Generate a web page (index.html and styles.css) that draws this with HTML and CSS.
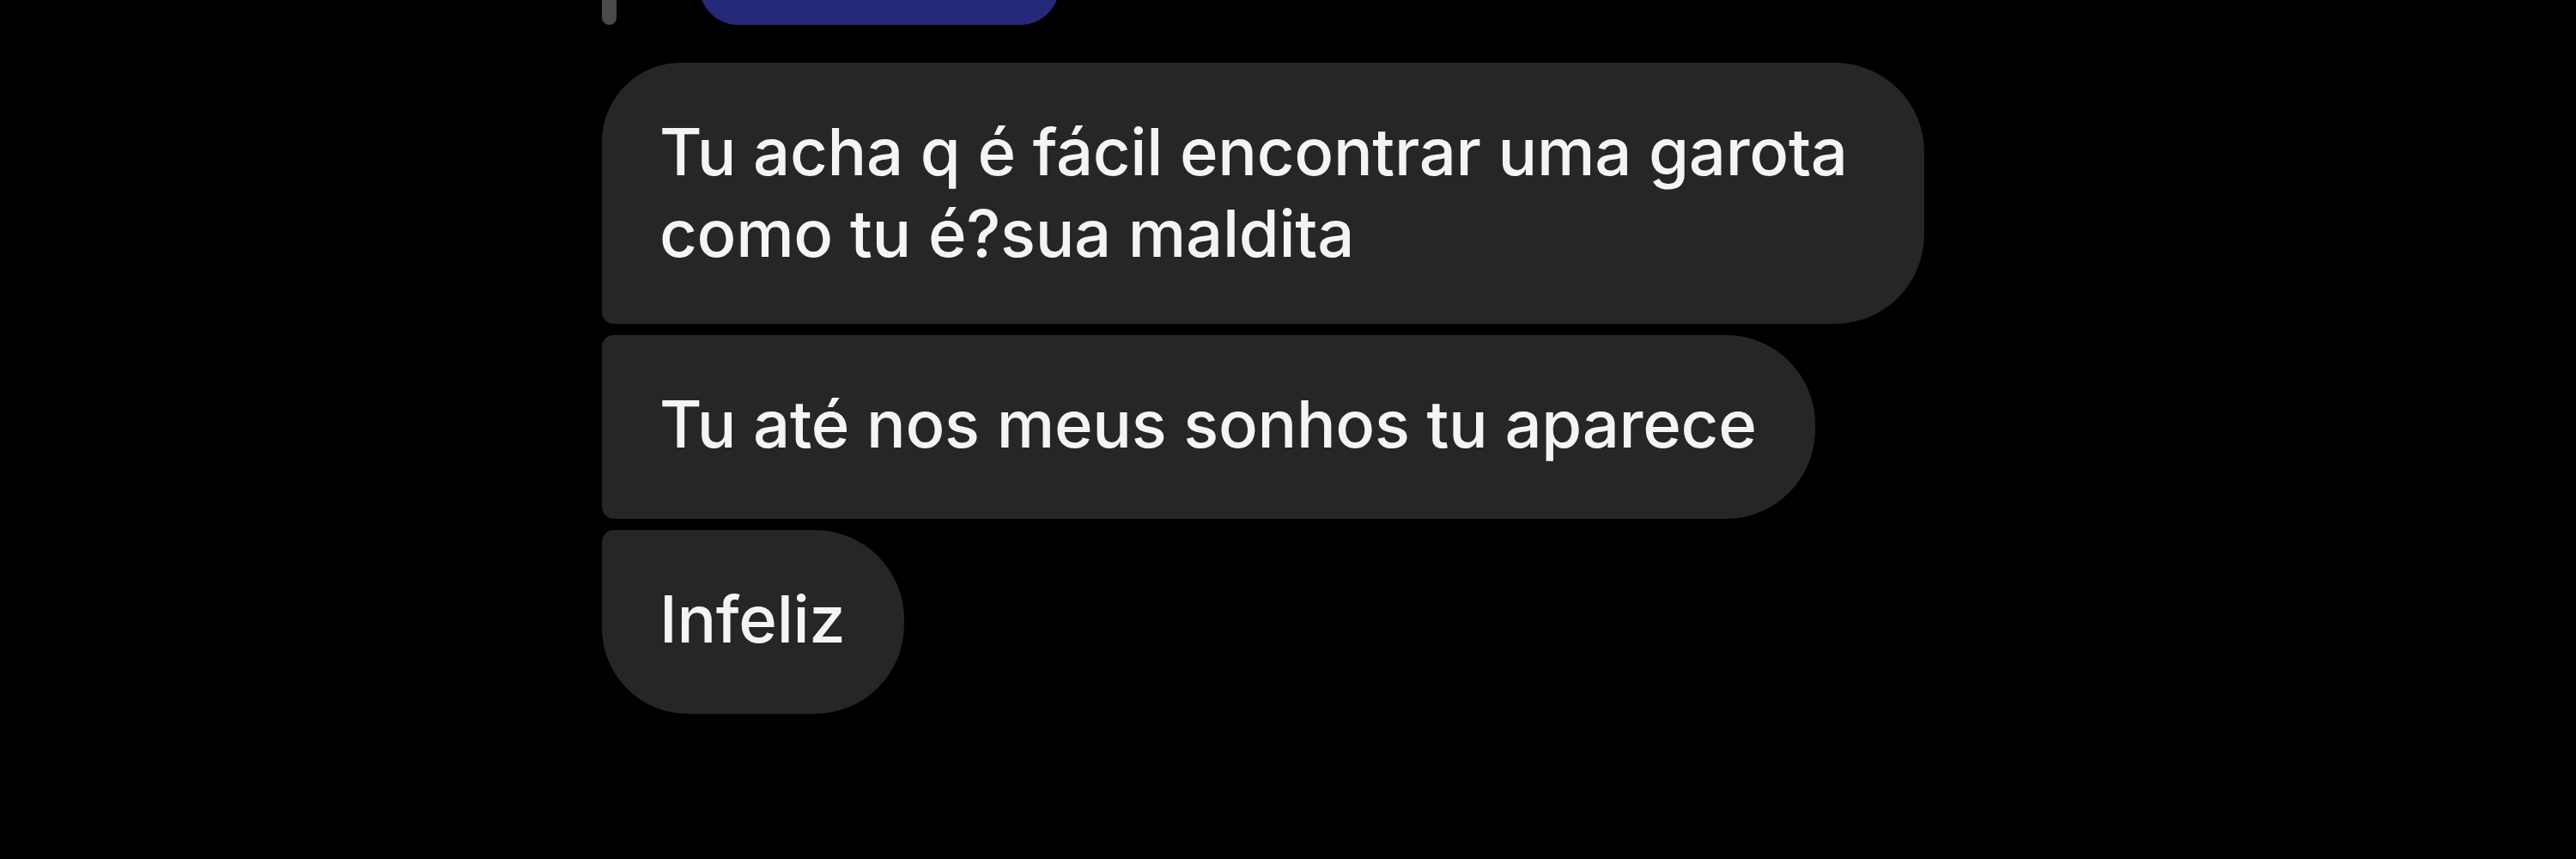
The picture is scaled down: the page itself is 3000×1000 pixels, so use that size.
FILE: index.html
```html
<!DOCTYPE html>
<html lang="pt-br">
<head>
    <meta charset="UTF-8">
    <meta name="viewport" content="width=device-width, initial-scale=1.0">
    <title>Direct</title>
    <link rel="stylesheet" href="styles.css">
</head>
<body>
    <div class="chat">
        <!-- resposta a uma mensagem (cortada no topo) -->
        <div class="reply">
            <span class="reply-bar"></span>
            <div class="reply-bubble"></div>
        </div>

        <div class="group">
            <div class="msg msg-first">Tu acha q é fácil encontrar uma garota como tu é?sua maldita</div>
            <div class="msg">Tu até nos meus sonhos tu aparece</div>
            <div class="msg msg-last">Infeliz</div>
        </div>
    </div>
</body>
</html>
```

FILE: styles.css
```css
html, body {
    background-color: #000;
    margin: 0;
    padding: 0;
}

body {
    height: 1000px;
    overflow: hidden;
    font-family: Inter, "Liberation Sans", sans-serif;
}

.chat {
    padding-left: 701px;
}

.reply {
    display: flex;
    align-items: flex-start;
    gap: 96px;
    height: 29px;
}

.reply-bar {
    width: 17px;
    height: 29px;
    background-color: #4b4b4b;
    border-radius: 0 0 9px 9px;
}

.reply-bubble {
    width: 420px;
    height: 92px;
    margin-top: -63px; /* o resto fica fora da tela */
    background-color: #26297a;
    border-radius: 63px;
}

.group {
    display: flex;
    flex-direction: column;
    align-items: flex-start;
    gap: 13px;
    margin-top: 44px;
}

.msg {
    box-sizing: border-box;
    max-width: 1540px;
    padding: 56px 68px 63px 67px;
    background-color: #262626;
    color: #f4f4f4;
    font-size: 76px;
    line-height: 95px;
    font-weight: 500;
    letter-spacing: -0.3px;
    border-radius: 14px 104px 104px 14px;
}

.msg-first {
    padding-bottom: 58px;
    border-top-left-radius: 92px;
}

.msg-last {
    border-bottom-left-radius: 100px;
}
```
